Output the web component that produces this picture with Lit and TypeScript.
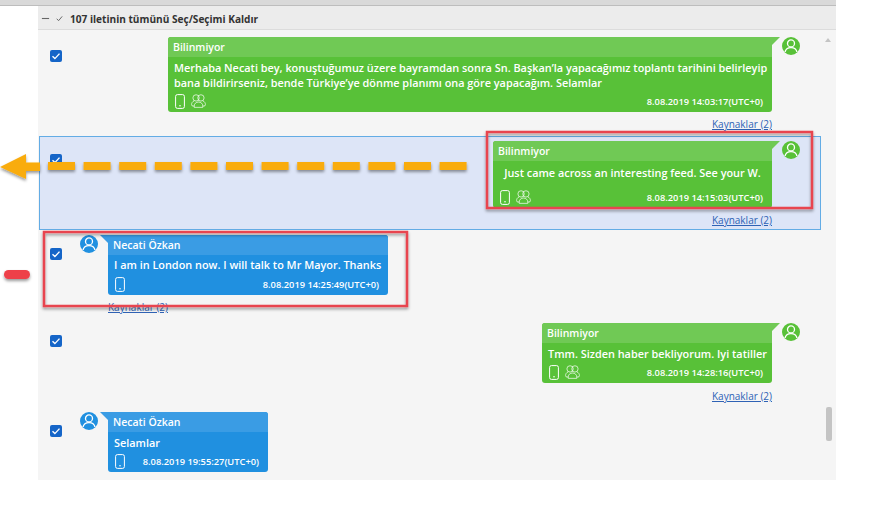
import { LitElement, html, css, svg } from "lit";
import { customElement } from "lit/decorators.js";

const phone = html`<svg class="ic phone" viewBox="0 0 10 15" fill="none" stroke="#fff" stroke-width="1"><rect x=".6" y=".6" width="8.800" height="13.800" rx="1.800"/><circle cx="5" cy="11.800" r=".8" fill="#fff" stroke="none"/></svg>`;
const people = html`<svg class="ic people" viewBox="0 0 16 15" fill="none" stroke="#fff" stroke-width=".75"><circle cx="5.400" cy="4.200" r="3.400"/><circle cx="10.600" cy="4.200" r="3.400"/><path d="M3.300 7.400C1.600 8 .6 9.400.6 11.400c0 1 .5 1.500 1.500 1.500h1.300M12.700 7.400c1.700.6 2.700 2 2.700 4 0 1-.5 1.500-1.500 1.500h-1.300"/><path d="M3.400 14.300v-1.500c0-2.400 2-4.200 4.600-4.200s4.600 1.800 4.600 4.200v1.500z"/></svg>`;
const avatar = (color: string) => html`<svg class="avatar" viewBox="0 0 18 18"><circle cx="9" cy="9" r="9" fill=${color}/><circle cx="9" cy="6.400" r="3.500" fill="none" stroke="#fff" stroke-width="1.300"/><path d="M3 15.200c.6-3.200 3-4.600 6-4.600s5.400 1.400 6 4.600" fill="none" stroke="#fff" stroke-width="1.300"/></svg>`;
const check = html`<span class="check"><svg viewBox="0 0 12 12" fill="none" stroke="#fff" stroke-width="1.400"><path d="M2.500 6.300l2.400 2.300 4.600-5"/></svg></span>`;

interface Msg {
  side: "in" | "out";
  name: string;
  lines: string[];
  time: string;
  width: number;
  people: boolean;
  link: boolean;
  selected?: boolean;
  cls: string;
}

const msgs: Msg[] = [
  {
    side: "out", name: "Bilinmiyor",
    lines: ["Merhaba Necati bey, konuştuğumuz üzere bayramdan sonra Sn. Başkan’la yapacağımız toplantı tarihini belirleyip", "bana bildirirseniz, bende Türkiye’ye dönme planımı ona göre yapacağım. Selamlar"],
    time: "8.08.2019 14:03:17(UTC+0)", width: 604, people: true, link: true, cls: "r1",
  },
  {
    side: "out", name: "Bilinmiyor",
    lines: ["Just came across an interesting feed. See your W."],
    time: "8.08.2019 14:15:03(UTC+0)", width: 279, people: true, link: true, selected: true, cls: "r2",
  },
  {
    side: "in", name: "Necati Özkan",
    lines: ["I am in London now. I will talk to Mr Mayor. Thanks"],
    time: "8.08.2019 14:25:49(UTC+0)", width: 280, people: false, link: true, cls: "r3",
  },
  {
    side: "out", name: "Bilinmiyor",
    lines: ["Tmm. Sizden haber bekliyorum. Iyi tatiller"],
    time: "8.08.2019 14:28:16(UTC+0)", width: 230, people: true, link: true, cls: "r4",
  },
  {
    side: "in", name: "Necati Özkan",
    lines: ["Selamlar"],
    time: "8.08.2019 19:55:27(UTC+0)", width: 160, people: false, link: false, cls: "r5",
  },
];

@customElement("app-root")
export class AppRoot extends LitElement {
  static styles = css`
    :host { display: block; position: relative; width: 869px; height: 505px; background: #fff; overflow: hidden;
      font-family: "Open Sans", "Noto Sans", sans-serif; font-size: 11px; font-weight: 600; color: #fff; }
    .top { height: 5px; width: 836px; background: #d9d9d9; border-bottom: 1px solid #bdbdbd; }
    .panel { margin-left: 38px; width: 798px; height: 474px; background: #f5f5f5; position: relative; }
    .head { height: 24px; box-sizing: border-box; background: #ececec; border-bottom: 1px solid #dcdcdc; display: flex; align-items: center;
      gap: 6px; padding: 2px 0 0 3px; color: #333; font-size: 10.100px; font-weight: 700; }
    .head svg { width: 9px; height: 9px; }
    .head svg + svg { width: 7px; height: 7px; margin-right: 1px; }
    .list { display: flex; flex-direction: column; padding-top: 6px; }
    .row { display: flex; align-items: flex-start; width: 782px; box-sizing: border-box; margin-left: 1px; border: 1px solid transparent; }
    .row.sel { background: #dde5f7; border-color: #63ace5; }
    .r1 { height: 100px; }
    .r2 { height: 94px; padding-top: 4px; }
    .r3 { height: 92px; padding-top: 4px; }
    .r4 { height: 89px; }
    .r5 { height: 68px; }
    .check { flex: none; width: 12px; height: 12px; border-radius: 2px; background: #1565c8; margin: 13px 0 0 10px; display: block; }
    .check svg { display: block; width: 12px; height: 12px; }
    .r4 .check { margin-top: 12px; }
    .msg { flex: 1; display: flex; flex-direction: column; }
    .out.msg { align-items: flex-end; padding-right: 48px; }
    .in.msg { align-items: flex-start; padding-left: 18px; }
    .line { display: flex; align-items: flex-start; }
    .avatar { width: 18px; height: 18px; flex: none; display: block; }
    .out .avatar { margin-left: 10px; margin-right: -28px; }
    .in .avatar { margin-right: 10px; }
    .bubble { position: relative; border-radius: 0 0 3px 3px; background: #58c138; }
    .in .bubble { background: #2090e0; }
    .out .bubble { border-top-left-radius: 3px; }
    .in .bubble { border-top-right-radius: 3px; }
    .name { height: 20px; display: flex; align-items: center; padding-left: 5px; font-size: 10.500px; background: #70c955; border-radius: inherit; border-bottom-left-radius: 0; border-bottom-right-radius: 0; }
    .in .name { background: #3a9ce4; }
    .out .bubble::before, .in .bubble::before { content: ""; position: absolute; top: 0; width: 8px; height: 8px; }
    .out .bubble::before { right: -8px; background: #70c955; clip-path: polygon(0 0, 100% 0, 0 100%); }
    .in .bubble::before { left: -8px; background: #3a9ce4; clip-path: polygon(0 0, 100% 0, 100% 100%); }
    .text { padding: 3px 6px 0; font-size: 10.880px; line-height: 15px; white-space: nowrap; }
    .r2 .text { padding: 4px 6px 6px; text-align: center; }
    .r3 .text { padding: 2px 6px 1px; }
    .foot { height: 22px; display: flex; align-items: center; justify-content: space-between; padding: 0 9px 0 7px; font-size: 9.300px; }
    .icons { display: flex; gap: 6px; align-items: center; }
    .phone { width: 10px; height: 15px; display: block; }
    .people { width: 15px; height: 14px; display: block; }
    .link { margin-top: 6px; font-size: 10px; font-weight: 400; color: #2f62b5; text-decoration: underline; line-height: 13px; }
    .r4 .link { margin-top: 7px; }
    .in .link { margin-left: 28px; }
    .scroll-up { position: absolute; left: 787px; top: 32px; width: 0; height: 0; border-left: 3.500px solid transparent; border-right: 3.500px solid transparent; border-bottom: 4px solid #c4c4c4; }
    .thumb { position: absolute; left: 788px; top: 401px; width: 6px; height: 34px; border-radius: 2px; background: #c4c4c4; }
    .over { position: absolute; left: 0; top: 0; pointer-events: none; }
  `;

  render() {
    return html`
      <div class="top"></div>
      <div class="panel">
        <div class="head">
          <svg viewBox="0 0 10 10" fill="none" stroke="#666" stroke-width="1.200"><path d="M1 5h8"/></svg>
          <svg viewBox="0 0 10 10" fill="none" stroke="#666" stroke-width="1.400"><path d="M1 5.500l2.800 2.500 5-6"/></svg>
          <span>107 iletinin tümünü Seç/Seçimi Kaldır</span>
        </div>
        <div class="list">
          ${msgs.map((m) => html`
            <div class="row ${m.cls} ${m.selected ? "sel" : ""}">
              ${check}
              <div class="msg ${m.side}">
                <div class="line">
                  ${m.side === "in" ? avatar("#2090e0") : ""}
                  <div class="bubble" style="width:${m.width}px">
                    <div class="name">${m.name}</div>
                    <div class="text">${m.lines.map((l) => html`<div>${l}</div>`)}</div>
                    <div class="foot">
                      <span class="icons">${phone}${m.people ? people : ""}</span>
                      <span>${m.time}</span>
                    </div>
                  </div>
                  ${m.side === "out" ? avatar("#58c138") : ""}
                </div>
                ${m.link ? html`<span class="link">Kaynaklar (2)</span>` : ""}
              </div>
            </div>
          `)}
        </div>
        <div class="scroll-up"></div>
        <div class="thumb"></div>
      </div>
      <svg class="over" width="869" height="505" viewBox="0 0 869 505">
        ${svg`
          <defs><filter id="s" x="-20%" y="-50%" width="140%" height="200%"><feDropShadow dx="0" dy="2" stdDeviation="1.500" flood-color="#000" flood-opacity=".4"/></filter></defs>
          <g filter="url(#s)">
            <path d="M48 166H467" stroke="#f9ac0c" stroke-width="8" stroke-dasharray="27 8.600" fill="none"/>
            <path d="M0 167L26 154V162.500H40V171H26V179Z" fill="#f9ac0c"/>
            <rect x="487" y="132" width="325" height="76" fill="none" stroke="#e8454f" stroke-width="2.500"/>
            <rect x="44" y="232" width="363" height="74" fill="none" stroke="#e8454f" stroke-width="2.500"/>
            <path d="M8.500 274.500H25.500" stroke="#ee3f4a" stroke-width="9" stroke-linecap="round"/>
          </g>
        `}
      </svg>
    `;
  }
}
